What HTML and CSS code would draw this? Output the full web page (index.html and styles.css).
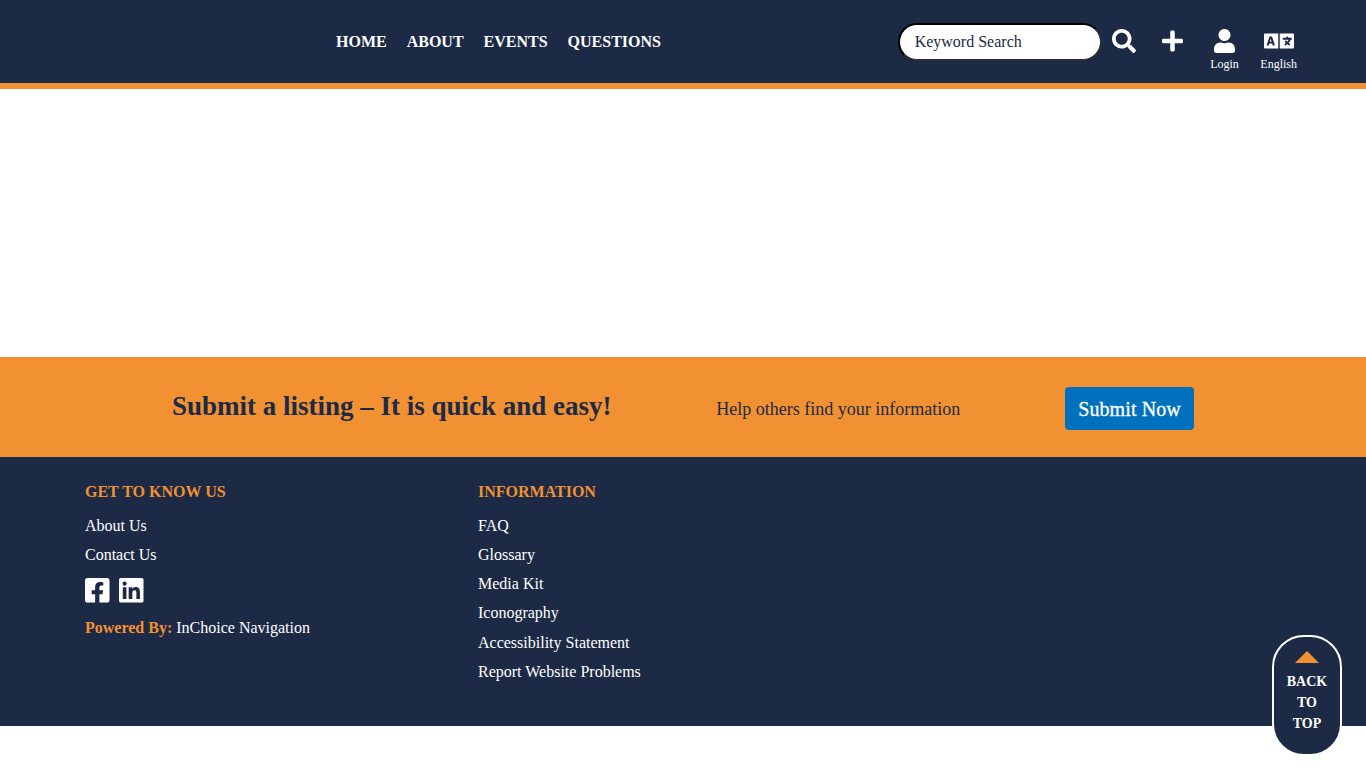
FILE: index.html
```
<!DOCTYPE html>
<html lang="en">
<head>
  <meta charset="UTF-8">
  <meta name="viewport" content="width=device-width, initial-scale=1.0">
  <title>InChoice Navigation</title>
  <link rel="stylesheet" href="styles.css">
</head>
<body>
  <header class="site-header">
    <nav class="main-nav">
      <a href="#">HOME</a>
      <a href="#">ABOUT</a>
      <a href="#">EVENTS</a>
      <a href="#">QUESTIONS</a>
    </nav>

    <div class="tools">
      <input type="text" class="search-input" placeholder="Keyword Search" aria-label="Keyword Search">
      <a href="#" class="tool search" aria-label="Search">
        <svg class="icon" viewBox="0 0 512 512"><path d="M505 442.7L405.3 343c-4.5-4.5-10.6-7-17-7H372c27.6-35.3 44-79.7 44-128C416 93.1 322.9 0 208 0S0 93.1 0 208s93.1 208 208 208c48.3 0 92.7-16.4 128-44v16.3c0 6.4 2.5 12.5 7 17l99.7 99.7c9.4 9.4 24.6 9.4 33.9 0l28.3-28.3c9.4-9.4 9.4-24.6.1-34zM208 336c-70.7 0-128-57.2-128-128 0-70.7 57.2-128 128-128 70.7 0 128 57.2 128 128 0 70.7-57.2 128-128 128z"/></svg>
      </a>
      <a href="#" class="tool add" aria-label="Add a listing">
        <svg class="icon" viewBox="0 0 448 512"><path d="M416 208H272V64c0-17.67-14.33-32-32-32h-32c-17.67 0-32 14.33-32 32v144H32c-17.67 0-32 14.33-32 32v32c0 17.67 14.33 32 32 32h144v144c0 17.67 14.33 32 32 32h32c17.67 0 32-14.33 32-32V304h144c17.67 0 32-14.33 32-32v-32c0-17.67-14.33-32-32-32z"/></svg>
      </a>
      <a href="#" class="tool login">
        <svg class="icon" viewBox="0 0 448 512"><path d="M224 256c70.7 0 128-57.3 128-128S294.7 0 224 0 96 57.3 96 128s57.3 128 128 128zm89.6 32h-16.7c-22.2 10.2-46.9 16-72.9 16s-50.6-5.8-72.9-16h-16.7C60.2 288 0 348.2 0 422.4V464c0 26.5 21.5 48 48 48h352c26.5 0 48-21.5 48-48v-41.6c0-74.2-60.2-134.4-134.4-134.4z"/></svg>
        <span>Login</span>
      </a>
      <a href="#" class="tool language">
        <svg class="icon" viewBox="0 0 640 512"><path d="M152.1 236.2c-3.5-12.1-7.8-33.2-7.8-33.2h-.5s-4.3 21.1-7.8 33.2l-11.1 37.5H163zM616 96H336v320h280c13.3 0 24-10.7 24-24V120c0-13.3-10.7-24-24-24zm-24 120c0 6.6-5.4 12-12 12h-11.4c-6.9 23.6-21.7 47.4-42.7 69.9 8.4 6.4 17.1 12.5 26.1 18 5.5 3.4 7.3 10.5 4.1 16.2l-7.9 13.9c-3.4 5.9-10.9 7.8-16.7 4.3-12.6-7.8-24.5-16.1-35.4-24.9-10.9 8.7-22.7 17.1-35.4 24.9-5.8 3.5-13.3 1.6-16.7-4.3l-7.9-13.9c-3.2-5.6-1.4-12.8 4.2-16.2 9.3-5.7 18-11.7 26.1-18-7.9-8.4-14.9-17-21-25.7-4-5.7-2.2-13.6 3.7-17.1l6.5-3.9 7.3-4.3c5.4-3.2 12.4-1.7 16 3.4 5 7 10.8 14 17.4 20.9 13.5-14.2 23.8-28.9 30-43.2H412c-6.6 0-12-5.4-12-12v-16c0-6.6 5.4-12 12-12h64v-16c0-6.6 5.4-12 12-12h16c6.6 0 12 5.4 12 12v16h64c6.6 0 12 5.4 12 12zM0 120v272c0 13.3 10.7 24 24 24h280V96H24c-13.3 0-24 10.7-24 24zm58.9 216.1L116.4 167c1.7-4.9 6.2-8.1 11.4-8.1h32.5c5.1 0 9.7 3.3 11.4 8.1l57.5 169.1c2.6 7.8-3.1 15.9-11.4 15.9h-22.9a12 12 0 0 1-11.5-8.6l-9.4-31.9h-60.2l-9.1 31.8c-1.5 5.1-6.2 8.7-11.5 8.7H70.3c-8.2 0-14-8.1-11.4-15.9z"/></svg>
        <span>English</span>
      </a>
    </div>
  </header>

  <main class="content"></main>

  <section class="submit-banner">
    <h2>Submit a listing – It is quick and easy!</h2>
    <p>Help others find your information</p>
    <a href="#" class="btn">Submit Now</a>
  </section>

  <footer class="site-footer">
    <div class="footer-col">
      <h3>GET TO KNOW US</h3>
      <ul>
        <li><a href="#">About Us</a></li>
        <li><a href="#">Contact Us</a></li>
      </ul>
      <div class="social">
        <a href="#" aria-label="Facebook">
          <svg viewBox="0 32 448 448"><path d="M400 32H48A48 48 0 0 0 0 80v352a48 48 0 0 0 48 48h137.25V327.69h-63V256h63v-54.64c0-62.15 37-96.48 93.67-96.48 27.14 0 55.52 4.84 55.52 4.84v61h-31.27c-30.81 0-40.42 19.12-40.42 38.73V256h68.78l-11 71.69h-57.78V480H400a48 48 0 0 0 48-48V80a48 48 0 0 0-48-48z"/></svg>
        </a>
        <a href="#" aria-label="LinkedIn">
          <svg viewBox="0 32 448 448"><path d="M416 32H31.9C14.3 32 0 46.5 0 64.3v383.4C0 465.5 14.3 480 31.9 480H416c17.6 0 32-14.5 32-32.3V64.3c0-17.8-14.4-32.3-32-32.3zM135.4 416H69V202.2h66.5V416zm-33.2-243c-21.3 0-38.5-17.3-38.5-38.5S80.9 96 102.2 96c21.2 0 38.5 17.3 38.5 38.5 0 21.3-17.2 38.5-38.5 38.5zm282.1 243h-66.4V312c0-24.8-.5-56.7-34.5-56.7-34.6 0-39.9 27-39.9 54.9V416h-66.4V202.2h63.7v29.2h.9c8.9-16.8 30.6-34.5 62.2-34.5 66.5 0 78.9 43.8 78.9 100.9V416z"/></svg>
        </a>
      </div>
      <p class="powered"><strong>Powered By:</strong> <a href="#">InChoice Navigation</a></p>
    </div>

    <div class="footer-col">
      <h3>INFORMATION</h3>
      <ul>
        <li><a href="#">FAQ</a></li>
        <li><a href="#">Glossary</a></li>
        <li><a href="#">Media Kit</a></li>
        <li><a href="#">Iconography</a></li>
        <li><a href="#">Accessibility Statement</a></li>
        <li><a href="#">Report Website Problems</a></li>
      </ul>
    </div>
  </footer>

  <a href="#" class="back-to-top">
    <span class="arrow"></span>
    <span>BACK</span>
    <span>TO</span>
    <span>TOP</span>
  </a>
</body>
</html>
```

FILE: styles.css
```
* {
  box-sizing: border-box;
}

body {
  font-family: "Liberation Serif", "Times New Roman", serif;
  font-size: 16px;
  line-height: 1.5;
  margin: 0;
  background-color: #fff;
  color: #1c2a46;
}

a {
  color: #fff;
  text-decoration: none;
}

h2, h3, p, ul {
  margin: 0;
  padding: 0;
}

/* Header */
.site-header {
  display: flex;
  height: 89px;
  padding: 23px 69px 0 336px;
  background-color: #1c2a46;
  border-bottom: 6px solid #f19131;
}

.main-nav {
  display: flex;
  gap: 20px;
  padding-top: 7px;
  font-weight: bold;
}

.tools {
  display: flex;
  align-items: flex-start;
  margin-left: auto;
}

.search-input {
  width: 204px;
  height: 38px;
  padding: 0 15px;
  border: 2px solid;
  border-color: #000 #2b2d33 #2b2d33 #000;
  border-radius: 20px;
  background-color: #fff;
  font-family: inherit;
  font-size: 16px;
}

.search-input::placeholder {
  color: #1c2a46;
  opacity: 1;
}

.tool {
  display: flex;
  flex-direction: column;
  align-items: center;
  padding-top: 6px;
  font-size: 12px;
  line-height: 18px;
}

.tool span {
  margin-top: 2px;
}

.icon {
  display: block;
  height: 24px;
  fill: #fff;
}

.search {
  margin-left: 10px;
}

.add {
  margin-left: 26px;
}

.login {
  margin-left: 27.5px;
}

.language {
  margin-left: 21.5px;
}

.content {
  height: 268px;
}

/* Submit banner */
.submit-banner {
  display: flex;
  justify-content: space-between;
  height: 100px;
  padding: 30px 172px 0;
  background-color: #f19131;
}

.submit-banner h2 {
  font-size: 27px;
  line-height: 38px;
}

.submit-banner p {
  font-size: 18px;
  line-height: 45px;
}

.btn {
  width: 129px;
  height: 43px;
  border-radius: 4px;
  background-color: #0071bc;
  font-size: 20px;
  letter-spacing: 0.1px;
  line-height: 44px;
  text-align: center;
  -webkit-text-stroke: 0.3px #fff;
}

/* Footer */
.site-footer {
  display: flex;
  height: 269px;
  padding: 23px 85px 0;
  background-color: #1c2a46;
}

.footer-col {
  width: 393px;
  color: #fff;
}

.footer-col h3 {
  margin-bottom: 7px;
  font-size: 16px;
  color: #f19131;
}

.footer-col ul {
  list-style: none;
}

.footer-col li {
  line-height: 29.15px;
}

.social {
  display: flex;
  gap: 9.5px;
  margin-top: 9px;
}

.social svg {
  display: block;
  width: 24.5px;
  height: 24.5px;
  fill: #fff;
}

.powered {
  margin-top: 13px;
}

.powered strong {
  color: #f19131;
}

/* Back to top */
.back-to-top {
  position: fixed;
  right: 24px;
  bottom: 12px;
  display: flex;
  flex-direction: column;
  align-items: center;
  width: 70px;
  height: 121px;
  padding-top: 14px;
  border: 2px solid #fff;
  border-radius: 32px;
  background-color: #1c2a46;
  font-size: 14px;
  font-weight: bold;
  line-height: 21px;
}

.arrow {
  margin-bottom: 8px;
  border-right: 12px solid transparent;
  border-bottom: 12px solid #f19131;
  border-left: 12px solid transparent;
}
```
